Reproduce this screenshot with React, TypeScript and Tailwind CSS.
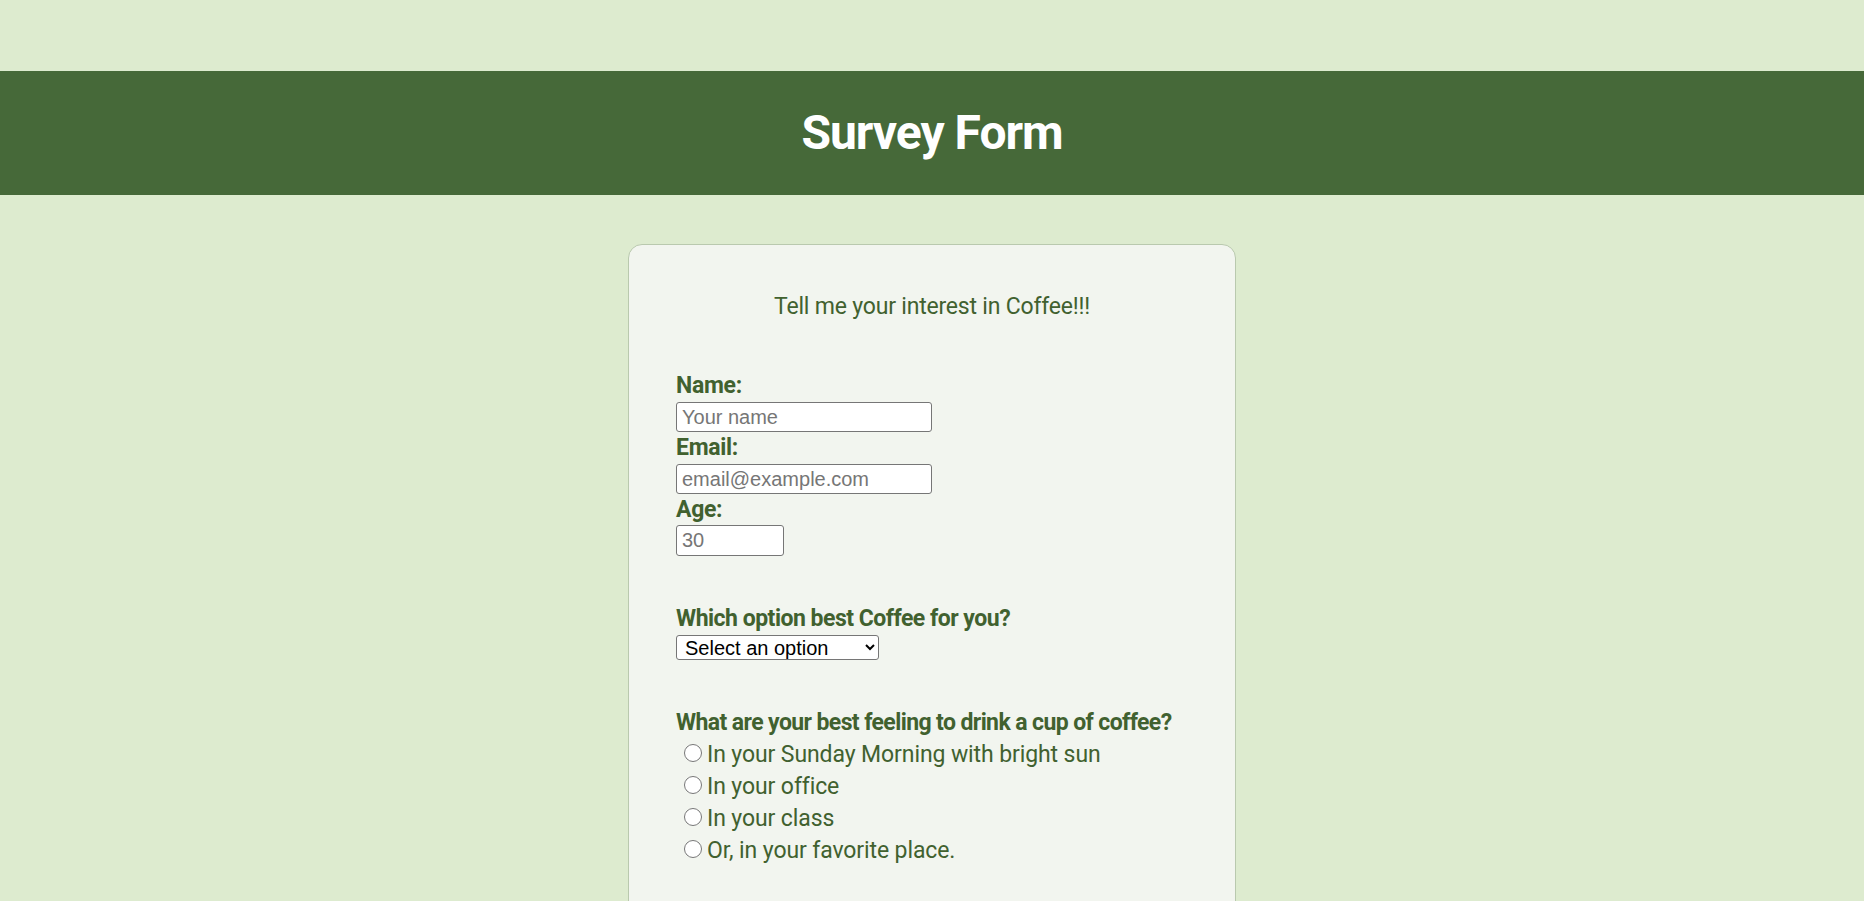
import React from "react";

const feelings = [
  "In your Sunday Morning with bright sun",
  "In your office",
  "In your class",
  "Or, in your favorite place.",
];

export default function App() {
  return (
    <div className="min-h-screen bg-[#ddebcf] pt-[71px] font-['Roboto',sans-serif] text-[#41612f]">
      {/* Header band */}
      <header className="flex h-[124px] items-center justify-center bg-[#466939]">
        <h1 className="text-[48px] font-bold leading-none tracking-[-1px] text-white">Survey Form</h1>
      </header>

      {/* Form card */}
      <main className="mx-auto mt-[49px] w-[608px] rounded-[14px] border border-[#b9c9ae] bg-[#f2f5ef] px-[47px] pb-24 pt-[46px]">
        <p className="text-center text-[23px] leading-[32px] tracking-[-0.2px]">Tell me your interest in Coffee!!!</p>

        <form className="mt-[47px] flex flex-col items-start">
          <label htmlFor="name" className="text-[23px] font-bold leading-[32px] tracking-[-0.3px]">Name:</label>
          <input
            id="name"
            type="text"
            placeholder="Your name"
            className="h-[30px] w-[256px] rounded-[3px] border border-[#767676] bg-white px-[5px] font-['Liberation_Sans',Arial,sans-serif] text-[20px] text-black placeholder:text-[#767676]"
          />
          <label htmlFor="email" className="text-[23px] font-bold leading-[32px] tracking-[-0.3px]">Email:</label>
          <input
            id="email"
            type="email"
            placeholder="email@example.com"
            className="h-[30px] w-[256px] rounded-[3px] border border-[#767676] bg-white px-[5px] font-['Liberation_Sans',Arial,sans-serif] text-[20px] text-black placeholder:text-[#767676]"
          />
          <label htmlFor="age" className="text-[23px] font-bold leading-[31px] tracking-[-0.3px]">Age:</label>
          <input
            id="age"
            type="number"
            placeholder="30"
            className="h-[31px] w-[108px] rounded-[3px] border border-[#767676] bg-white px-[5px] font-['Liberation_Sans',Arial,sans-serif] text-[20px] text-black placeholder:text-[#767676]"
          />

          <label htmlFor="coffee" className="mt-[47px] whitespace-nowrap text-[23px] font-bold leading-[32px] tracking-[-0.5px]">
            Which option best Coffee for you?
          </label>
          <select
            id="coffee"
            defaultValue=""
            className="h-[25px] w-[203px] rounded-[3px] border border-[#767676] bg-white pl-[4px] font-['Liberation_Sans',Arial,sans-serif] text-[20px] leading-none text-black"
          >
            <option value="">Select an option</option>
            <option value="espresso">Espresso</option>
            <option value="latte">Latte</option>
            <option value="cappuccino">Cappuccino</option>
          </select>

          <p className="mt-[47px] whitespace-nowrap text-[23px] font-bold leading-[32px] tracking-[-0.6px]">
            What are your best feeling to drink a cup of coffee?
          </p>
          <div className="flex flex-col">
            {feelings.map((f) => (
              <label key={f} className="flex h-[32px] items-center text-[23px] tracking-[-0.1px]">
                <input type="radio" name="feeling" className="mb-[4px] ml-[8px] mr-[5px] h-[18px] w-[18px]" />
                {f}
              </label>
            ))}
          </div>
        </form>
      </main>
    </div>
  );
}
